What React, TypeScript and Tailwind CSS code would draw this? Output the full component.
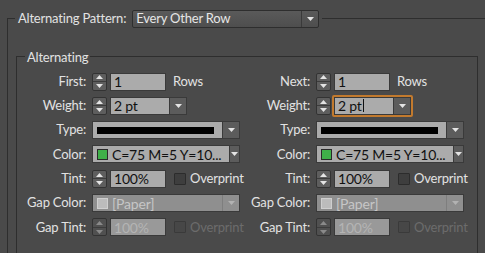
import React from "react"

function Tri({ up, dim }: { up?: boolean; dim?: boolean }) {
  return (
    <svg width="7" height="4" viewBox="0 0 7 4" className="block">
      <path d={up ? "M0 4 L3.5 0 L7 4 Z" : "M0 0 L7 0 L3.5 4 Z"} fill={dim ? "#8a8a8a" : "#e4e4e4"} />
    </svg>
  )
}

function Stepper({ disabled }: { disabled?: boolean }) {
  return (
    <div
      className={`flex h-[18px] w-[15px] shrink-0 flex-col rounded-[2px] border border-[#333] ${
        disabled ? "bg-[#505050]" : "bg-[#5e5e5e]"
      }`}
    >
      <div className="flex flex-1 items-center justify-center border-b border-[#3c3c3c]">
        <Tri up dim={disabled} />
      </div>
      <div className="flex flex-1 items-center justify-center">
        <Tri dim={disabled} />
      </div>
    </div>
  )
}

function Field({ value, disabled }: { value: string; disabled?: boolean }) {
  return (
    <div
      className={`flex h-[18px] w-[56px] items-center border border-[#3a3a3a] pl-[3px] text-[14px] ${
        disabled ? "bg-[#999] text-[#b4b4b4]" : "bg-[#ababab] text-[#111]"
      }`}
    >
      {value}
    </div>
  )
}

function Combo({ value, focused }: { value: string; focused?: boolean }) {
  return (
    <div className={focused ? "-m-[2px] rounded-[2px] border-2 border-[#c27a2e]" : ""}>
      <div className="flex h-[18px] w-[77px] border border-[#3a3a3a]">
        <div className="flex flex-1 items-center bg-[#ababab] pl-[3px] text-[14px] text-[#111]">
          {value}
          {focused && <span className="ml-px h-[13px] w-px bg-[#111]" />}
        </div>
        <div className="flex w-[17px] items-center justify-center border-l border-[#3a3a3a] bg-[#5c5c5c]">
          <Tri />
        </div>
      </div>
    </div>
  )
}

function Select({ children, disabled }: { children: React.ReactNode; disabled?: boolean }) {
  return (
    <div className="flex h-[18px] w-[148px] border border-[#3a3a3a]">
      <div
        className={`flex flex-1 items-center gap-[4px] pl-[4px] pr-[8px] text-[14px] ${
          disabled ? "bg-[#8f8f8f] text-[#c6c6c6]" : "bg-[#ababab] text-[#111]"
        }`}
      >
        {children}
      </div>
      <div
        className={`flex w-[17px] items-center justify-center border-l ${
          disabled ? "border-[#7e7e7e] bg-[#8f8f8f]" : "border-[#3a3a3a] bg-[#5c5c5c]"
        }`}
      >
        <svg width="7" height="4" viewBox="0 0 7 4" className="block">
          <path d="M0 0 L7 0 L3.5 4 Z" fill={disabled ? "#b2b2b2" : "#e4e4e4"} />
        </svg>
      </div>
    </div>
  )
}

function Check({ label, disabled }: { label: string; disabled?: boolean }) {
  return (
    <div className="ml-[5px] flex items-center gap-[4px]">
      <div
        className={`h-[12px] w-[12px] rounded-[1px] border ${
          disabled ? "border-[#3a3a3a] bg-[#474747]" : "border-[#2c2c2c] bg-[#3e3e3e]"
        }`}
      />
      <span className={disabled ? "text-[#6c6c6c]" : "text-[#e2e2e2]"}>{label}</span>
    </div>
  )
}

function Row({ label, children }: { label: string; children: React.ReactNode }) {
  return (
    <div className="flex h-[18px] items-center gap-[6px]">
      <div className="w-[69px] shrink-0 text-right whitespace-nowrap">{label}</div>
      <div className="flex items-center gap-[3px]">{children}</div>
    </div>
  )
}

function Column({ first, right }: { first: string; right?: boolean }) {
  return (
    <div className="flex w-[222px] flex-col gap-y-[6.33px]">
      <Row label={first + ":"}>
        <Stepper />
        <Field value="1" />
        <span className="ml-[4px]">Rows</span>
      </Row>
      <Row label="Weight:">
        <Stepper />
        <Combo value="2 pt" focused={right} />
      </Row>
      <Row label="Type:">
        <Select>
          <div className="h-[7px] flex-1 bg-black" />
        </Select>
      </Row>
      <Row label="Color:">
        <Select>
          <div className="h-[11px] w-[11px] shrink-0 border border-[#2a2a2a] bg-[#3fb049]" />
          <span className="whitespace-nowrap">C=75 M=5 Y=10...</span>
        </Select>
      </Row>
      <Row label="Tint:">
        <Stepper />
        <Field value="100%" />
        <Check label="Overprint" />
      </Row>
      <Row label="Gap Color:">
        <Select disabled>
          <div className="h-[11px] w-[11px] shrink-0 border border-[#cfcfcf] bg-[#bcbcbc]" />
          <span>[Paper]</span>
        </Select>
      </Row>
      <Row label="Gap Tint:">
        <Stepper disabled />
        <Field value="100%" disabled />
        <Check label="Overprint" disabled />
      </Row>
    </div>
  )
}

export default function App() {
  return (
    <div className="h-[253px] w-[485px] overflow-hidden bg-[#4a4a4a] pt-[9px] pl-[7px] font-['Lato',sans-serif] text-[13px] tracking-[-0.2px] text-[#e2e2e2]">
      <fieldset className="border-t border-l border-[#2e2e2e]">
        <legend className="ml-[7px] flex items-center gap-[6px] px-[3px]">
          <span>Alternating Pattern:</span>
          <div className="flex h-[18px] w-[187px] rounded-[2px] border border-[#2e2e2e] bg-gradient-to-b from-[#5a5a5a] to-[#4e4e4e]">
            <div className="flex flex-1 items-center pl-[3px] text-[#e6e6e6]">Every Other Row</div>
            <div className="flex w-[17px] items-center justify-center border-l border-[#3a3a3a]">
              <Tri />
            </div>
          </div>
        </legend>
        <fieldset className="mt-[20px] mr-[7px] ml-[8px] border-t border-r border-l border-[#2e2e2e] pt-[8px] pb-[40px]">
          <legend className="ml-[8px] px-[2px] leading-[16px]">Alternating</legend>
          <div className="flex gap-[2px]">
            <Column first="First" />
            <Column first="Next" right />
          </div>
        </fieldset>
      </fieldset>
    </div>
  )
}
